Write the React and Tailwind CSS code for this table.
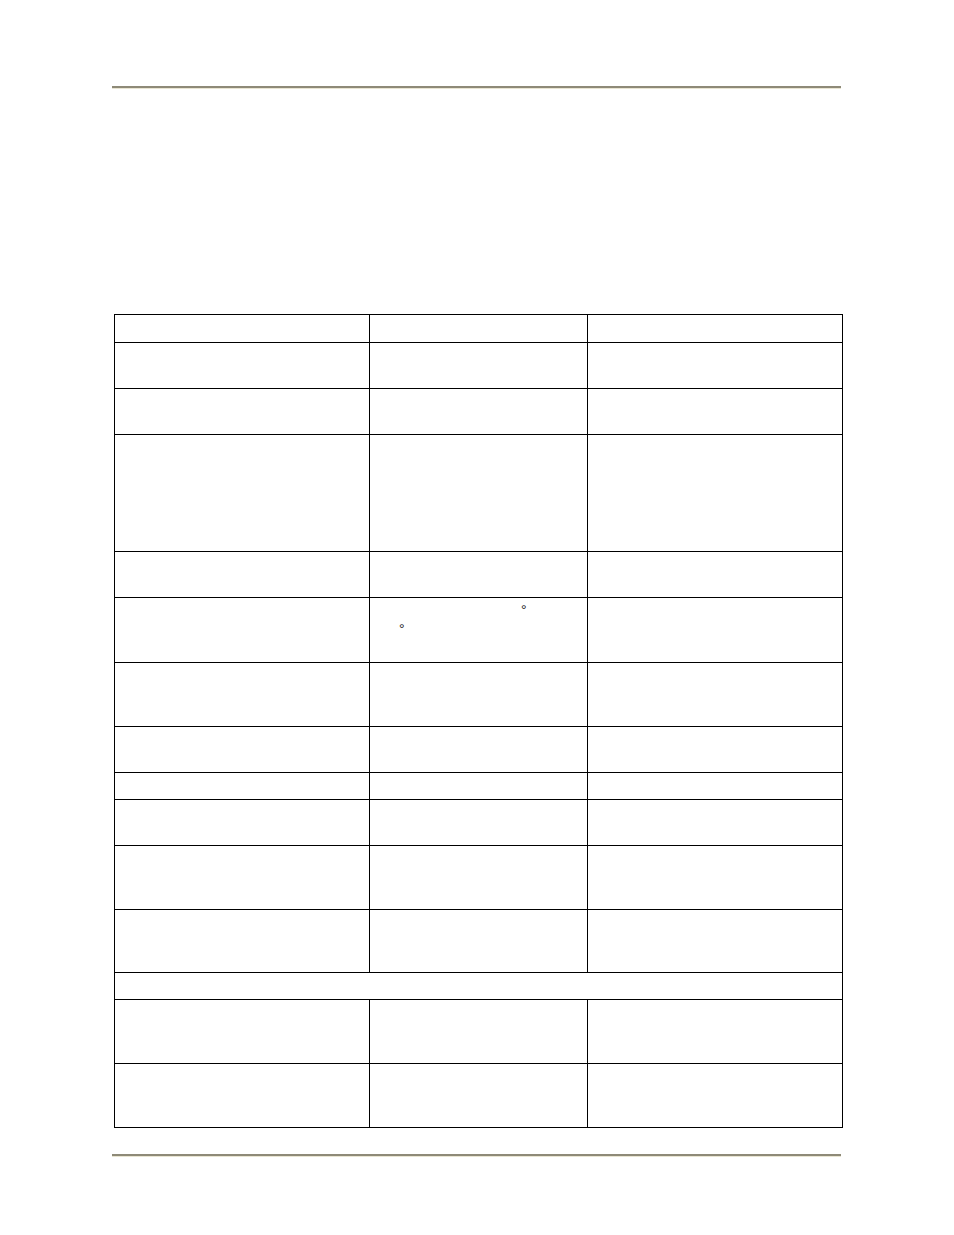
const rows = [
  { h: 28 },
  { h: 46 },
  { h: 46 },
  { h: 117 },
  { h: 46 },
  { h: 65, degrees: true },
  { h: 64 },
  { h: 46 },
  { h: 27 },
  { h: 46 },
  { h: 64 },
  { h: 63 },
  { h: 27, span: true },
  { h: 64 },
  { h: 64 },
];

const Rule = () => (
  <div className="ml-[112px] w-[729px]">
    <div className="h-[2px] bg-[#8e8a78]"></div>
    <div className="h-px bg-[#e9e5d2]"></div>
  </div>
);

export default function App() {
  return (
    <div className="w-[954px] h-[1235px] bg-white font-['Liberation_Sans',Arial,sans-serif] text-black">
      <div className="pt-[86px]">
        <Rule />
      </div>

      <table className="ml-[114px] mt-[225px] w-[728px] table-fixed border-collapse">
        <colgroup>
          <col className="w-[255px]" />
          <col className="w-[218px]" />
          <col className="w-[255px]" />
        </colgroup>
        <tbody>
          {rows.map((r, i) => (
            <tr key={i} style={{ height: r.h }}>
              {r.span ? (
                <td colSpan={3} className="border border-black p-0"></td>
              ) : (
                <>
                  <td className="border border-black p-0"></td>
                  <td className="border border-black p-0 align-top">
                    {r.degrees && (
                      <div className="pt-[3px] text-[14px] leading-[19px] text-[#222]">
                        <div className="pl-[151px]">°</div>
                        <div className="pl-[29px]">°</div>
                      </div>
                    )}
                  </td>
                  <td className="border border-black p-0"></td>
                </>
              )}
            </tr>
          ))}
        </tbody>
      </table>

      <div className="mt-[26px]">
        <Rule />
      </div>
    </div>
  );
}
